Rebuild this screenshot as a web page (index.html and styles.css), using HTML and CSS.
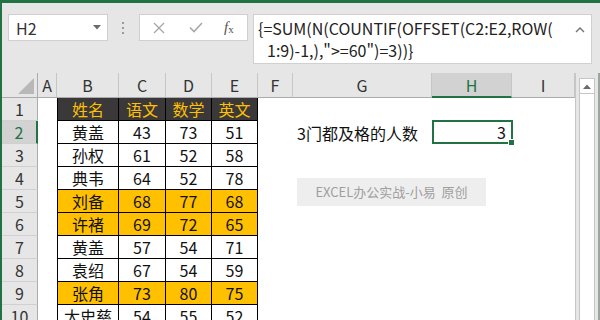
FILE: index.html
```html
<!DOCTYPE html>
<html lang="zh-CN">

<head>
    <meta charset="UTF-8">
    <meta name="viewport" content="width=device-width, initial-scale=1.0">
    <title>Excel - 3门都及格的人数</title>
    <link rel="stylesheet" href="styles.css">
</head>

<body>
    <div class="window">
        <div class="toolbar">
            <div class="namebox">
                <span>H2</span>
                <svg class="dropdown" width="8" height="5" viewBox="0 0 8 5"><polygon points="0,0 8,0 4,4.5" fill="#6b6b6b"/></svg>
            </div>
            <div class="grip">
                <i></i><i></i><i></i>
            </div>
            <div class="fx-buttons">
                <svg class="btn-x" width="12" height="12" viewBox="0 0 12 12"><path d="M1 1 L11 11 M11 1 L1 11" stroke="#a8a8a8" stroke-width="1.4" fill="none"/></svg>
                <svg class="btn-ok" width="14" height="11" viewBox="0 0 14 11"><path d="M1 5.5 L5 9.5 L13 1" stroke="#a8a8a8" stroke-width="1.6" fill="none"/></svg>
                <span class="fx"><i>f</i><sub>x</sub></span>
            </div>
            <div class="formula">
                <div class="formula-text">
                    <span class="line">{=SUM(N(COUNTIF(OFFSET(C2:E2,ROW(</span>
                    <span class="line indent">1:9)-1,),"&gt;=60")=3))}</span>
                </div>
                <svg class="collapse" width="10" height="6" viewBox="0 0 10 6"><path d="M1 5 L5 1 L9 5" stroke="#707070" stroke-width="1.4" fill="none"/></svg>
            </div>
        </div>

        <div class="sheet-area">
            <div class="sheet">
                <div class="grid">
                    <!-- column headers -->
                    <div class="corner"><svg width="16" height="16" viewBox="0 0 16 16"><polygon points="16,0 16,16 0,16" fill="#b8b8b8"/></svg></div>
                    <div class="ch">A</div>
                    <div class="ch">B</div>
                    <div class="ch">C</div>
                    <div class="ch">D</div>
                    <div class="ch">E</div>
                    <div class="ch">F</div>
                    <div class="ch">G</div>
                    <div class="ch ch-sel">H</div>
                    <div class="ch">I</div>

                    <!-- row 1 -->
                    <div class="rh">1</div>
                    <div class="c"></div>
                    <div class="c t th tl">姓名</div>
                    <div class="c t th">语文</div>
                    <div class="c t th">数学</div>
                    <div class="c t th">英文</div>
                    <div class="c"></div>
                    <div class="c"></div>
                    <div class="c"></div>
                    <div class="c"></div>

                    <!-- row 2 -->
                    <div class="rh rh-sel">2</div>
                    <div class="c"></div>
                    <div class="c t tl">黄盖</div>
                    <div class="c t">43</div>
                    <div class="c t">73</div>
                    <div class="c t">51</div>
                    <div class="c"></div>
                    <div class="c label">3门都及格的人数</div>
                    <div class="c active">3</div>
                    <div class="c"></div>

                    <!-- row 3 -->
                    <div class="rh">3</div>
                    <div class="c"></div>
                    <div class="c t tl">孙权</div>
                    <div class="c t">61</div>
                    <div class="c t">52</div>
                    <div class="c t">58</div>
                    <div class="c"></div>
                    <div class="c"></div>
                    <div class="c"></div>
                    <div class="c"></div>

                    <!-- row 4 -->
                    <div class="rh">4</div>
                    <div class="c"></div>
                    <div class="c t tl">典韦</div>
                    <div class="c t">64</div>
                    <div class="c t">52</div>
                    <div class="c t">78</div>
                    <div class="c"></div>
                    <div class="c"></div>
                    <div class="c"></div>
                    <div class="c"></div>

                    <!-- row 5 -->
                    <div class="rh">5</div>
                    <div class="c"></div>
                    <div class="c t tl pass">刘备</div>
                    <div class="c t pass">68</div>
                    <div class="c t pass">77</div>
                    <div class="c t pass">68</div>
                    <div class="c"></div>
                    <div class="c"></div>
                    <div class="c"></div>
                    <div class="c"></div>

                    <!-- row 6 -->
                    <div class="rh">6</div>
                    <div class="c"></div>
                    <div class="c t tl pass">许褚</div>
                    <div class="c t pass">69</div>
                    <div class="c t pass">72</div>
                    <div class="c t pass">65</div>
                    <div class="c"></div>
                    <div class="c"></div>
                    <div class="c"></div>
                    <div class="c"></div>

                    <!-- row 7 -->
                    <div class="rh">7</div>
                    <div class="c"></div>
                    <div class="c t tl">黄盖</div>
                    <div class="c t">57</div>
                    <div class="c t">54</div>
                    <div class="c t">71</div>
                    <div class="c"></div>
                    <div class="c"></div>
                    <div class="c"></div>
                    <div class="c"></div>

                    <!-- row 8 -->
                    <div class="rh">8</div>
                    <div class="c"></div>
                    <div class="c t tl">袁绍</div>
                    <div class="c t">67</div>
                    <div class="c t">54</div>
                    <div class="c t">59</div>
                    <div class="c"></div>
                    <div class="c"></div>
                    <div class="c"></div>
                    <div class="c"></div>

                    <!-- row 9 -->
                    <div class="rh">9</div>
                    <div class="c"></div>
                    <div class="c t tl pass">张角</div>
                    <div class="c t pass">73</div>
                    <div class="c t pass">80</div>
                    <div class="c t pass">75</div>
                    <div class="c"></div>
                    <div class="c"></div>
                    <div class="c"></div>
                    <div class="c"></div>

                    <!-- row 10 -->
                    <div class="rh">10</div>
                    <div class="c"></div>
                    <div class="c t tl">太史慈</div>
                    <div class="c t">54</div>
                    <div class="c t">55</div>
                    <div class="c t">52</div>
                    <div class="c"></div>
                    <div class="c"></div>
                    <div class="c"></div>
                    <div class="c"></div>
                </div>
                <div class="watermark">EXCEL办公实战-小易&nbsp; 原创</div>
            </div>
            <div class="vscroll">
                <div class="vscroll-up"><svg width="8" height="5" viewBox="0 0 8 5"><polygon points="0,5 8,5 4,0.5" fill="#6b6b6b"/></svg></div>
            </div>
            <div class="frame-edge"></div>
        </div>
    </div>
</body>

</html>
```

FILE: styles.css
```css
body {
    margin: 0;
    font-family: "Noto Sans CJK SC", "Liberation Sans", sans-serif;
    color: #000;
    background: #e6e6e6;
}

.window {
    width: 600px;
    height: 320px;
    box-sizing: border-box;
    border-top: 3px solid #217346;
    border-left: 2px solid #217346;
    overflow: hidden;
    display: flex;
    flex-direction: column;
}

/* formula bar row */
.toolbar {
    height: 70px;
    flex-shrink: 0;
    display: flex;
    align-items: flex-start;
    padding: 11px 0 0 6px;
    box-sizing: border-box;
    background: #e6e6e6;
}

.namebox {
    width: 100px;
    height: 27px;
    box-sizing: border-box;
    background: #fff;
    border: 1px solid #d0d0d0;
    display: flex;
    align-items: center;
    justify-content: space-between;
    padding: 0 6px 0 7px;
    font-size: 16px;
    color: #333;
}

.grip {
    width: 3px;
    margin: 8px 0 0 14px;
    display: flex;
    flex-direction: column;
    gap: 3px;
}

.grip i {
    width: 2px;
    height: 2px;
    background: #9a9a9a;
}

.fx-buttons {
    width: 109px;
    height: 27px;
    margin-left: 14px;
    box-sizing: border-box;
    background: #fff;
    border: 1px solid #d0d0d0;
    display: flex;
    align-items: center;
    padding-left: 13px;
}

.btn-ok {
    margin-left: 24px;
}

.fx {
    margin-left: 21px;
    font-family: "Liberation Serif", serif;
    font-size: 15px;
    color: #555;
}

.fx sub {
    font-size: 11px;
    vertical-align: -1px;
}

.formula {
    width: 339px;
    height: 50px;
    margin-left: 5px;
    box-sizing: border-box;
    background: #fff;
    border: 1px solid #d0d0d0;
    display: flex;
    justify-content: space-between;
    padding: 2px 6px 0 4px;
}

.formula-text {
    font-size: 16px;
    line-height: 22px;
    color: #222;
}

.formula-text .line {
    display: block;
    white-space: nowrap;
}

.formula-text .indent {
    padding-left: 9px;
}

.collapse {
    margin-top: 10px;
}

/* sheet */
.sheet-area {
    flex: 1;
    display: flex;
}

.sheet {
    position: relative;
    width: 574px;
    background: #fff;
    border-right: 1px solid #c6c6c6;
    box-sizing: content-box;
}

.grid {
    display: grid;
    grid-template-columns: 36px 19px 62px 47px 46px 46px 35px 139px 80px 63px;
    grid-template-rows: 25px repeat(10, 23px);
}

.corner {
    background: #e6e6e6;
    border-right: 1px solid #ababab;
    border-bottom: 1px solid #ababab;
    display: flex;
    align-items: flex-end;
    justify-content: flex-end;
    padding: 0 3px 3px 0;
    box-sizing: border-box;
}

.ch {
    background: #e6e6e6;
    border-right: 1px solid #c6c6c6;
    border-bottom: 1px solid #ababab;
    box-sizing: border-box;
    display: flex;
    align-items: center;
    justify-content: center;
    font-size: 16px;
    color: #333;
}

.ch-sel {
    background: #d2d2d2;
    color: #217346;
    border-bottom: 2px solid #217346;
}

.rh {
    background: #e6e6e6;
    border-right: 1px solid #ababab;
    border-bottom: 1px solid #d0d0d0;
    box-sizing: border-box;
    display: flex;
    align-items: center;
    justify-content: center;
    font-size: 16px;
    color: #333;
}

.rh-sel {
    background: #d2d2d2;
    color: #217346;
    border-right: 2px solid #217346;
}

.c {
    box-sizing: border-box;
    display: flex;
    align-items: center;
    justify-content: center;
    font-size: 16px;
    line-height: 20px;
    white-space: nowrap;
}

.t {
    border-right: 1px solid #000;
    border-bottom: 1px solid #000;
    color: #111;
}

.tl {
    border-left: 1px solid #000;
}

.th {
    background: #3a3838;
    color: #ffc000;
}

.pass {
    background: #ffc000;
}

.label {
    justify-content: flex-start;
    padding-left: 4px;
    color: #111;
}

.active {
    position: relative;
    justify-content: flex-end;
    padding-right: 5px;
    border: 2px solid #217346;
    margin: -1px -1px 0 0;
    color: #111;
}

.active::after {
    content: "";
    position: absolute;
    right: -4px;
    bottom: -4px;
    width: 5px;
    height: 5px;
    background: #217346;
    border: 1px solid #fff;
}

.watermark {
    position: absolute;
    left: 295px;
    top: 105px;
    width: 189px;
    height: 28px;
    background: #eeeeee;
    color: #9e9e9e;
    font-size: 13px;
    line-height: 28px;
    text-align: center;
    white-space: nowrap;
}

.vscroll {
    width: 14px;
    margin: 5px 0 0 3px;
    background: #fff;
    border: 1px solid #c6c6c6;
    border-bottom: none;
}

.vscroll-up {
    height: 14px;
    border-bottom: 1px solid #c6c6c6;
    display: flex;
    align-items: center;
    justify-content: center;
}

.frame-edge {
    width: 2px;
    margin-left: 3px;
    background: #9aa69e;
}
```
